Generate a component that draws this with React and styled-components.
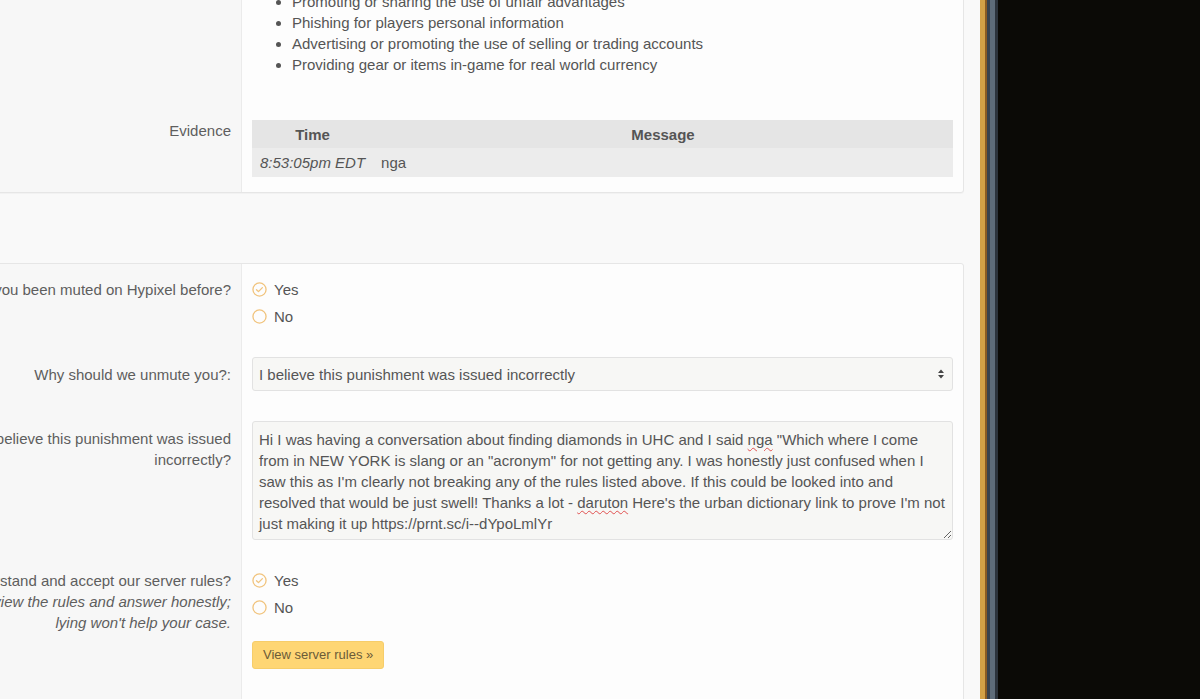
import React from "react";
import styled, { createGlobalStyle } from "styled-components";

const GlobalStyle = createGlobalStyle`
  html, body {
    margin: 0;
    padding: 0;
    overflow: hidden;
    background: #0b0a06;
  }
  body {
    font-family: "Liberation Sans", Arial, sans-serif;
    font-size: 15px;
    color: #555;
  }
`;

const rules = [
  "Spamming or flooding the chat",
  "Using inappropriate or offensive language",
  "Promoting or sharing the use of unfair advantages",
  "Phishing for players personal information",
  "Advertising or promoting the use of selling or trading accounts",
  "Providing gear or items in-game for real world currency",
];

const CheckCircle = () => (
  <svg width="15" height="15" viewBox="0 0 16 16" fill="none">
    <circle cx="8" cy="8" r="7" stroke="#f1c47e" strokeWidth="1.4" />
    <path d="M4.8 8.2l2.1 2.1 4.2-4.3" stroke="#f1c47e" strokeWidth="1.4" strokeLinecap="round" strokeLinejoin="round" />
  </svg>
);

const EmptyCircle = () => (
  <svg width="15" height="15" viewBox="0 0 16 16" fill="none">
    <circle cx="8" cy="8" r="7" stroke="#f1c47e" strokeWidth="1.4" />
  </svg>
);

const SelectArrows = () => (
  <svg width="8" height="12" viewBox="0 0 8 12">
    <path d="M4 1.5L7 5H1z" fill="#444" />
    <path d="M4 10.5L1 7h6z" fill="#444" />
  </svg>
);

const App = () => {
  return (
    <>
      <GlobalStyle />
      <Screen>
        <Main>
          <Card>
            <Row>
              <Label />
              <Field>
                <RuleList>
                  {rules.map((r) => (
                    <li key={r}>{r}</li>
                  ))}
                </RuleList>
              </Field>
            </Row>
            <Row>
              <Label>Evidence</Label>
              <Field>
                <Table>
                  <thead>
                    <tr>
                      <HeadCell $w="105px">Time</HeadCell>
                      <HeadCell>Message</HeadCell>
                    </tr>
                  </thead>
                  <tbody>
                    <tr>
                      <TimeCell>8:53:05pm EDT</TimeCell>
                      <Cell>nga</Cell>
                    </tr>
                  </tbody>
                </Table>
              </Field>
            </Row>
          </Card>

          <Card $gap>
            <Row>
              <Label>Have you been muted on Hypixel before?</Label>
              <Field>
                <Radio>
                  <CheckCircle />
                  Yes
                </Radio>
                <Radio>
                  <EmptyCircle />
                  No
                </Radio>
              </Field>
            </Row>
            <Row>
              <Label $offset={7}>Why should we unmute you?:</Label>
              <Field>
                <Select>
                  I believe this punishment was issued incorrectly
                  <SelectArrows />
                </Select>
              </Field>
            </Row>
            <Row>
              <Label $offset={7}>
                Why do you believe this punishment was issued incorrectly?
              </Label>
              <Field>
                <TextArea>
                  Hi I was having a conversation about finding diamonds in UHC
                  and I said <Misspelt>nga</Misspelt> "Which where I come from
                  in NEW YORK is slang or an "acronym" for not getting any. I
                  was honestly just confused when I saw this as I'm clearly not
                  breaking any of the rules listed above. If this could be
                  looked into and resolved that would be just swell! Thanks a
                  lot - <Misspelt>daruton</Misspelt> Here's the urban
                  dictionary link to prove I'm not just making it up
                  https://prnt.sc/i--dYpoLmlYr
                </TextArea>
              </Field>
            </Row>
            <Row>
              <Label>
                Do you understand and accept our server rules?
                <Hint>
                  Please review the rules and answer honestly;
                  <br />
                  lying won't help your case.
                </Hint>
              </Label>
              <Field $bottom={60}>
                <Radio>
                  <CheckCircle />
                  Yes
                </Radio>
                <Radio>
                  <EmptyCircle />
                  No
                </Radio>
                <RulesButton>View server rules »</RulesButton>
              </Field>
            </Row>
          </Card>
        </Main>
        <Stripes />
        <Backdrop />
      </Screen>
    </>
  );
};

export default App;

const Screen = styled.div`
  display: flex;
  min-height: 100vh;
  width: 100%;
`;

const Main = styled.div`
  flex: 0 0 1100px;
  margin-left: -120px;
  margin-top: -67px;
  padding-right: 16px;
  box-sizing: border-box;
  background: #f9f9f9;
  min-height: calc(100vh + 67px);
`;

const Card = styled.div`
  background: #fdfdfd;
  border: 1px solid #e6e6e6;
  border-radius: 3px;
  box-shadow: 0 1px 1px rgba(0, 0, 0, 0.03);
  margin-top: ${(p) => (p.$gap ? "70px" : "0")};
  overflow: hidden;
`;

const Row = styled.div`
  display: grid;
  grid-template-columns: 360px 1fr;
`;

const Label = styled.div`
  background: #f7f7f7;
  padding: ${(p) => 15 + (p.$offset || 0)}px 10px 15px 0;
  text-align: right;
  line-height: 21px;
  color: #5e5e5e;
`;

const Hint = styled.span`
  display: block;
  font-style: italic;
`;

const Field = styled.div`
  border-left: 1px solid #ebebeb;
  padding: 15px 10px ${(p) => p.$bottom || 15}px;
  min-width: 0;
`;

const RuleList = styled.ul`
  margin: 0 0 15px;
  padding-left: 40px;
  line-height: 21px;
  color: #555;
`;

const Table = styled.table`
  width: 100%;
  border-collapse: collapse;
  color: #555;
`;

const HeadCell = styled.th`
  width: ${(p) => p.$w || "auto"};
  background: #e5e5e5;
  height: 28px;
  padding: 0 8px;
  font-weight: bold;
  text-align: center;
`;

const Cell = styled.td`
  background: #ececec;
  height: 29px;
  padding: 0 8px;
`;

const TimeCell = styled(Cell)`
  font-style: italic;
  white-space: nowrap;
`;

const Radio = styled.div`
  display: flex;
  align-items: center;
  gap: 7px;
  height: 21px;
  line-height: 21px;
  color: #555;
  & + & {
    margin-top: 6px;
  }
`;

const Select = styled.div`
  height: 34px;
  box-sizing: border-box;
  display: flex;
  align-items: center;
  justify-content: space-between;
  padding: 0 7px 0 6px;
  background: #f7f7f5;
  border: 1px solid #e2e2e2;
  border-radius: 3px;
  color: #555;
`;

const TextArea = styled.div`
  height: 119px;
  box-sizing: border-box;
  padding: 7px 6px 5px;
  background: #f7f7f5;
  border: 1px solid #e2e2e2;
  border-radius: 3px;
  line-height: 21px;
  color: #555;
  resize: vertical;
  overflow: hidden;
`;

const Misspelt = styled.span`
  text-decoration: underline wavy #e05050;
  text-decoration-thickness: 1px;
  text-underline-offset: 2px;
`;

const RulesButton = styled.button`
  margin-top: 23px;
  display: inline-block;
  font-family: "Liberation Sans", Arial, sans-serif;
  font-size: 13px;
  line-height: 18px;
  padding: 4px 10px;
  background: #fed674;
  border: 1px solid #f6cd6a;
  border-radius: 3px;
  color: #6b5b38;
  cursor: pointer;
`;

const Stripes = styled.div`
  flex: 0 0 18px;
  background: linear-gradient(
    to right,
    #d2a146 0,
    #d2a146 5px,
    #8b5c22 5px,
    #8b5c22 7px,
    #38434f 7px,
    #38434f 10px,
    #5e6c79 10px,
    #5e6c79 15px,
    #2c333b 15px,
    #2c333b 18px
  );
`;

const Backdrop = styled.div`
  flex: 1;
  background: #0b0a06;
`;
